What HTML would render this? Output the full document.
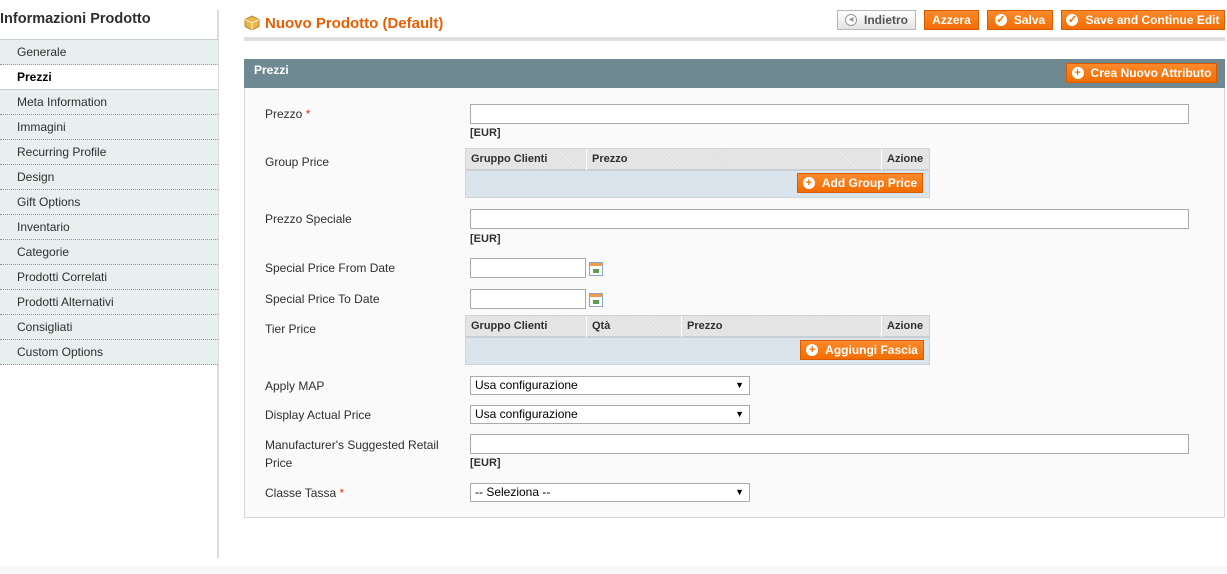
<!DOCTYPE html>
<html><head><meta charset="utf-8"><style>
*{box-sizing:border-box;margin:0;padding:0}
body{width:1227px;height:574px;background:#fff;font-family:"Liberation Sans",Arial,sans-serif;font-size:12px;color:#2f2f2f;position:relative;overflow:hidden}
.a{position:absolute}
.side{left:0;top:39px;width:218px}
.side div{height:25px;line-height:24px;padding-left:17px;background:#e7efef;border-bottom:1px dotted #8c9a9a;color:#2f2f2f}
.side div.act{background:#fff;font-weight:bold;color:#000;border-bottom:1px solid #c6cfcf}
.btn{position:absolute;height:20px;background:linear-gradient(#fb8a2c,#f26d00);border:1px solid #d85b00;color:#fff;font-weight:bold;font-size:12px;display:flex;align-items:center;justify-content:center;white-space:nowrap}
.ic{display:inline-block;width:12px;height:12px;border-radius:50%;background:#fff;color:#f47000;font-size:11px;line-height:12px;margin-right:7px;text-align:center;font-weight:bold}
.lbl{position:absolute;left:265px;color:#2f2f2f}
.inp{position:absolute;left:470px;height:20px;background:#fff;border:1px solid #aaa}
.eur{position:absolute;left:470px;font-weight:bold;font-size:11px;color:#2f2f2f}
.tbl{position:absolute;left:465px;width:465px;border:1px solid #cdd4d4;background:#d9e4ec}
.th{height:22px;background:repeating-linear-gradient(45deg,#e9e9e9 0 1px,#e2e2e2 1px 3px);border-bottom:2px solid #c8d0d6;position:relative}
.th span{position:absolute;top:0;line-height:21px;font-weight:bold;font-size:11px;padding-left:5px;border-left:1px solid #fff;height:21px}
.sel{position:absolute;left:470px;width:280px;height:19px;background:#fff;border:1px solid #aaa;line-height:17px;padding-left:4px;color:#000}
.sel:after{content:"▼";position:absolute;right:5px;top:0;font-size:9px}
.cal{position:absolute;left:589px;width:14px;height:14px;border:1px solid #8aa6c8;background:linear-gradient(#f59a4a 0 3px,#fff 3px);}
.cal:after{content:"";position:absolute;left:3px;top:6px;width:6px;height:4px;background:#5aa04a}
</style></head><body>
<div class="a" style="left:0;top:11px;font-size:14.5px;font-weight:bold;color:#2f2f2f">Informazioni Prodotto</div>
<div class="a" style="left:217px;top:10px;width:2px;height:548px;background:#dcdcdc"></div>
<div class="a side" style="border-top:1px solid #c6cfcf">
<div>Generale</div><div class="act">Prezzi</div><div>Meta Information</div><div>Immagini</div><div>Recurring Profile</div><div>Design</div><div>Gift Options</div><div>Inventario</div><div>Categorie</div><div>Prodotti Correlati</div><div>Prodotti Alternativi</div><div>Consigliati</div><div>Custom Options</div>
</div>
<svg class="a" style="left:244px;top:15px" width="16" height="16" viewBox="0 0 16 16"><path d="M8 1L15 4.5V11.5L8 15L1 11.5V4.5Z" fill="#e9b54a" stroke="#b8862a"/><path d="M1 4.5L8 8L15 4.5M8 8V15" stroke="#fff3c8" fill="none"/></svg>
<div class="a" style="left:265px;top:15px;font-size:15px;font-weight:bold;color:#eb5e00">Nuovo Prodotto (Default)</div>
<div class="a" style="left:244px;top:37px;width:981px;height:4px;background:#dfdfdf"></div>
<div class="btn" style="left:837px;top:10px;width:79px;background:linear-gradient(#fff,#e3e3e3);border-color:#b7b7b7;color:#555"><span class="ic" style="border:1px solid #999;color:#999;font-size:6px;line-height:10px">◀</span>Indietro</div>
<div class="btn" style="left:924px;top:10px;width:55px">Azzera</div>
<div class="btn" style="left:987px;top:10px;width:66px"><span class="ic">✓</span>Salva</div>
<div class="btn" style="left:1061px;top:10px;width:164px"><span class="ic">✓</span>Save and Continue Edit</div>
<div class="a" style="left:244px;top:59px;width:981px;height:29px;background:#6f8992"></div>
<div class="a" style="left:254px;top:63px;color:#fff;font-weight:bold">Prezzi</div>
<div class="btn" style="left:1066px;top:63px;width:151px"><span class="ic">+</span>Crea Nuovo Attributo</div>
<div class="a" style="left:244px;top:88px;width:981px;height:430px;background:#fafafa;border:1px solid #d6d6d6;border-top:none"></div>
<div class="lbl" style="top:107px">Prezzo <span style="color:#eb340a">*</span></div>
<div class="inp" style="top:104px;width:719px"></div><div class="eur" style="top:127px">[EUR]</div>
<div class="lbl" style="top:155px">Group Price</div>
<div class="tbl" style="top:148px;height:50px"><div class="th"><span style="left:0;border:none">Gruppo Clienti</span><span style="left:120px">Prezzo</span><span style="left:415px">Azione</span></div>
<div class="btn" style="left:331px;top:24px;width:126px"><span class="ic">+</span>Add Group Price</div></div>
<div class="lbl" style="top:212px">Prezzo Speciale</div>
<div class="inp" style="top:209px;width:719px"></div><div class="eur" style="top:233px">[EUR]</div>
<div class="lbl" style="top:261px">Special Price From Date</div>
<div class="inp" style="top:258px;width:116px"></div><div class="cal" style="top:262px"></div>
<div class="lbl" style="top:292px">Special Price To Date</div>
<div class="inp" style="top:289px;width:116px"></div><div class="cal" style="top:293px"></div>
<div class="lbl" style="top:322px">Tier Price</div>
<div class="tbl" style="top:315px;height:50px"><div class="th"><span style="left:0;border:none">Gruppo Clienti</span><span style="left:120px">Qtà</span><span style="left:215px">Prezzo</span><span style="left:415px">Azione</span></div>
<div class="btn" style="left:334px;top:24px;width:124px"><span class="ic">+</span>Aggiungi Fascia</div></div>
<div class="lbl" style="top:379px">Apply MAP</div><div class="sel" style="top:376px">Usa configurazione</div>
<div class="lbl" style="top:408px">Display Actual Price</div><div class="sel" style="top:405px">Usa configurazione</div>
<div class="lbl" style="top:436px;line-height:18px">Manufacturer's Suggested Retail<br>Price</div>
<div class="inp" style="top:434px;width:719px"></div><div class="eur" style="top:457px">[EUR]</div>
<div class="lbl" style="top:486px">Classe Tassa <span style="color:#eb340a">*</span></div><div class="sel" style="top:483px">-- Seleziona --</div>
<div class="a" style="left:0;top:566px;width:1227px;height:8px;background:#f8f8f8"></div>
</body></html>
